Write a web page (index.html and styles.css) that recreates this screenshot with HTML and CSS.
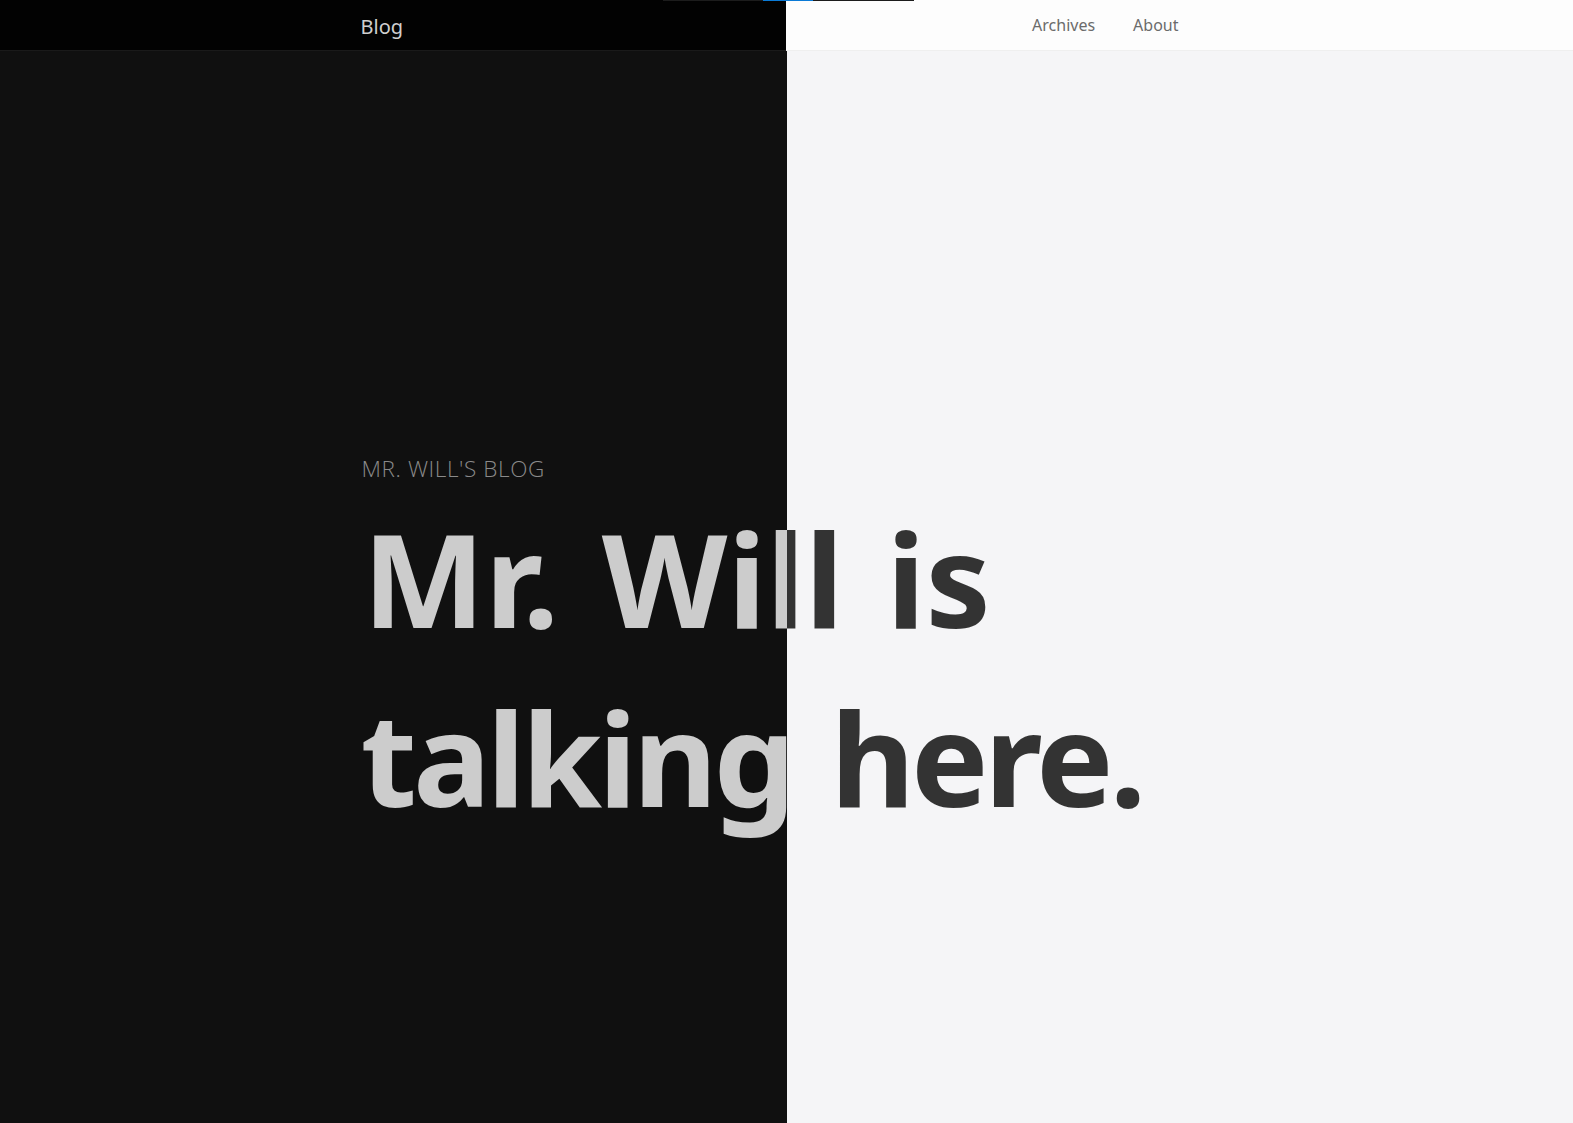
FILE: index.html
```html
<!DOCTYPE html>
<html lang="en">
<head>
<meta charset="utf-8">
<title>Mr. Will's Blog</title>
<link rel="stylesheet" href="styles.css">
</head>
<body>
<div class="progress"><span class="progress-fill"></span></div>
<header class="site-header">
  <div class="container header-inner">
    <a class="brand" href="#">Blog</a>
    <nav class="nav">
      <a class="nav-link" href="#">Archives</a>
      <a class="nav-link" href="#">About</a>
    </nav>
  </div>
</header>
<main class="hero">
  <p class="container hero-kicker">MR. WILL'S BLOG</p>
  <h1 class="hero-title"><span class="title-line title-line-1">Mr. Will is</span><span class="title-line title-line-2">talking here.</span></h1>
</main>
</body>
</html>
```
FILE: styles.css
```css
html, body {
  margin: 0;
  padding: 0;
  height: 100%;
}
body {
  font-family: "Noto Sans", "Open Sans", sans-serif;
  background: linear-gradient(90deg, #101010 50%, #f5f5f7 50%);
  min-height: 100vh;
  overflow: hidden;
}
.container {
  width: 852px;
  margin: 0 auto;
  box-sizing: border-box;
}
.progress {
  position: fixed;
  top: 0;
  left: calc(50% - 124px);
  width: 251px;
  height: 1px;
  background: #1c1c1c;
  z-index: 10;
}
.progress-fill {
  position: absolute;
  left: 100px;
  top: 0;
  width: 50px;
  height: 1px;
  background: #0a7ad6;
}
.site-header {
  height: 51px;
  box-sizing: border-box;
  background: linear-gradient(90deg, #020202 50%, #fdfdfd 50%);
  border-bottom: 1px solid;
  border-image: linear-gradient(90deg, #1a1a1a 50%, #efefef 50%) 1;
}
.header-inner {
  height: 50px;
  display: flex;
  align-items: center;
  justify-content: space-between;
  padding-right: 34px;
}
.brand {
  color: #cfcfcf;
  font-size: 20px;
  text-decoration: none;
  margin-top: 2px;
}
.nav {
  display: flex;
  gap: 38px;
}
.nav-link {
  color: #6b6b6b;
  font-size: 16px;
  text-decoration: none;
}
.hero {
  padding-top: 401px;
}
.hero-kicker {
  margin-top: 0;
  margin-bottom: 3px;
  font-family: "Open Sans", "Noto Sans", sans-serif;
  font-weight: 300;
  font-size: 22.5px;
  line-height: 33px;
  color: #8a8a8a;
  letter-spacing: 0.6px;
  padding-left: 1px;
}
.hero-title {
  margin: 0;
  padding: 0 calc(50% - 426px);
  font-size: 130px;
  line-height: 179px;
  font-weight: 700;
  background: linear-gradient(90deg, #cccccc 50%, #333333 50%);
  -webkit-background-clip: text;
  background-clip: text;
  color: transparent;
}
.title-line {
  display: block;
  white-space: nowrap;
  word-spacing: 9px;
}
.title-line-1 {
  letter-spacing: 0;
  padding-left: 2px;
}
.title-line-2 {
  letter-spacing: -4px;
}
```
